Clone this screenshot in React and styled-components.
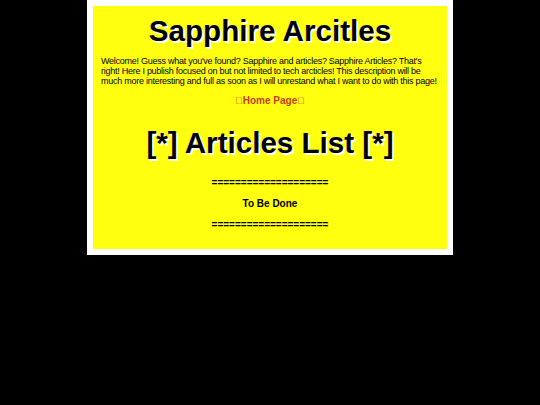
import React from "react";
import styled, { createGlobalStyle } from "styled-components";

const Global = createGlobalStyle`
  html, body {
    margin: 0;
    padding: 0;
    background: #000;
  }
  body {
    font-family: "Liberation Sans", Arial, sans-serif;
  }
`;

const Frame = styled.div`
  width: 354px;
  margin: 0 auto;
  padding: 6px;
  background: #fff;
`;

const Panel = styled.main`
  background: #ffff0f;
  padding: 8px 8px 18px;
  color: #000;
`;

const Title = styled.h1`
  margin: 0;
  font-size: 29.6px;
  line-height: 34px;
  font-weight: bold;
  text-align: center;
  text-shadow: 2px 2px 0 #fff;
  margin-top: ${(p) => p.$top || 0}px;
`;

const Intro = styled.p`
  margin: 8px 0 0;
  font-size: 9px;
  line-height: 10px;
  letter-spacing: -0.26px;
`;

const HomeLink = styled.a`
  display: block;
  margin-top: 9px;
  text-align: center;
  font-size: 10px;
  line-height: 12px;
  font-weight: bold;
  color: #c53b1f;
  text-decoration: none;
  cursor: pointer;
`;

const Note = styled.div`
  text-align: center;
  font-size: 10px;
  line-height: 12px;
  font-weight: bold;
  margin-top: ${(p) => p.$top}px;
`;

const rule = "====================";

export default function App() {
  return (
    <>
      <Global />
      <Frame>
        <Panel>
          <Title>Sapphire Arcitles</Title>
          <Intro>
            Welcome! Guess what you've found? Sapphire and articles? Sapphire
            Articles? That's right! Here I publish focused on but not limited
            to tech arcticles! This description will be much more interesting
            and full as soon as I will unrestand what I want to do with this
            page!
          </Intro>
          <HomeLink href="#">{"\uf015"}Home Page{"\uf015"}</HomeLink>
          <Title $top={19}>[*] Articles List [*]</Title>
          <Note $top={17}>{rule}</Note>
          <Note $top={9}>To Be Done</Note>
          <Note $top={9}>{rule}</Note>
        </Panel>
      </Frame>
    </>
  );
}
